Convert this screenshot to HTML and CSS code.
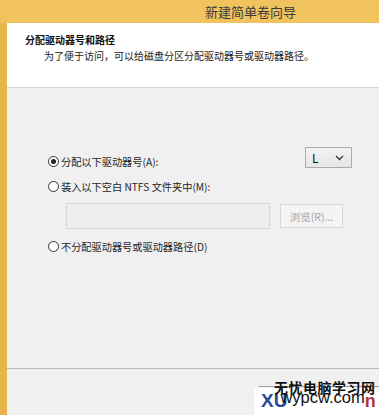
FILE: index.html
```html
<!DOCTYPE html>
<html lang="zh-CN">
<head>
    <meta charset="UTF-8">
    <title>新建简单卷向导</title>
    <link rel="stylesheet" href="styles.css">
</head>
<body>
    <div class="window">
        <div class="titlebar">新建简单卷向导</div>
        <div class="frame">
            <div class="header">
                <h1>分配驱动器号和路径</h1>
                <p>为了便于访问，可以给磁盘分区分配驱动器号或驱动器路径。</p>
            </div>

            <div class="content">
                <div class="row first">
                    <label class="option"><span class="radio checked"></span>分配以下驱动器号(A):</label>
                    <div class="select">L<svg width="9" height="6" viewBox="0 0 9 6"><path d="M1 1 L4.5 4.5 L8 1" fill="none" stroke="#333" stroke-width="1.3"/></svg></div>
                </div>
                <div class="row second">
                    <label class="option"><span class="radio"></span>装入以下空白 NTFS 文件夹中(M):</label>
                </div>
                <div class="row path-row">
                    <div class="path-input"></div>
                    <div class="btn disabled">浏览(R)...</div>
                </div>
                <div class="row last">
                    <label class="option"><span class="radio"></span>不分配驱动器号或驱动器路径(D)</label>
                </div>
            </div>

            <div class="footer">
                <div class="watermark">
                    <div class="wm-title">无忧电脑学习网</div>
                    <div class="wm-box"><span class="wm-blue">XU</span><span class="wm-url">wypcw.com</span><span class="wm-red">n</span></div>
                </div>
            </div>
        </div>
    </div>
</body>
</html>
```

FILE: styles.css
```css
* { margin: 0; padding: 0; box-sizing: border-box; }
body { font-family: "Noto Sans CJK SC", "Noto Sans", sans-serif; font-size: 10.2px; color: #1e1e1e; background: #f0f0f0; width: 379px; height: 415px; overflow: hidden; }
.window { height: 415px; display: flex; flex-direction: column; }
.titlebar { height: 23px; background: #f0c35e; color: #3a3a3a; font-size: 13px; line-height: 23px; padding-left: 205px; flex-shrink: 0; }
.frame { flex: 1; border-left: 7px solid #e8b54d; display: flex; flex-direction: column; background: #f0f0f0; }
.header { height: 65px; background: #fff; border-bottom: 1px solid #d4d4d4; padding: 9px 0 0 18px; }
.header h1 { font-size: 10px; font-weight: bold; line-height: 16px; color: #111; }
.header p { font-size: 10px; line-height: 16px; padding-left: 19px; color: #222; }
.content { height: 281px; border-bottom: 1px solid #b9b9b9; padding: 59px 27px 0 41px; }
.row { display: flex; align-items: center; }
.row.first { align-items: flex-start; justify-content: space-between; }
.row.first .option { margin-top: 6px; }
.row.second { margin-top: 8px; }
.row.last { margin-top: 9px; }
.option { display: flex; align-items: center; line-height: 17px; color: #1e1e1e; }
.radio { width: 11px; height: 11px; border: 1px solid #333; border-radius: 50%; background: #fff; margin-right: 2px; display: flex; align-items: center; justify-content: center; }
.radio.checked::after { content: ""; width: 5px; height: 5px; border-radius: 50%; background: #222; }
.select { width: 47px; height: 21px; border: 1px solid #acacac; background: linear-gradient(#f2f2f2, #e6e6e6); display: flex; align-items: center; justify-content: space-between; padding: 0 7px 0 6px; font-size: 12px; color: #111; }
.path-row { margin: 8px 0 0 18px; height: 26px; gap: 10px; }
.path-input { width: 204px; height: 26px; border: 1px solid #d9d9d9; background: #efefef; }
.btn { width: 63px; height: 24px; border: 1px solid #d6d6d6; background: #f4f4f4; display: flex; align-items: center; justify-content: center; font-size: 10.5px; }
.btn.disabled { color: #a6a6a6; }
.footer { flex: 1; position: relative; background: #f0f0f0; }
.watermark { position: absolute; left: 240px; top: 11px; right: 0; bottom: 0; }
.wm-title { position: relative; z-index: 2; font-size: 14px; font-weight: bold; line-height: 15px; color: #111; padding-left: 27px; letter-spacing: 0.5px; white-space: nowrap; }
.wm-title::before { content: ""; position: absolute; left: 12px; right: 0; top: 6px; height: 1px; background: #9aa3b4; z-index: -1; }
.wm-box { position: absolute; z-index: 1; left: 7px; top: 8px; right: 0; bottom: 0; background: #fff; padding-left: 7px; white-space: nowrap; }
.wm-blue { font-family: "Liberation Sans", sans-serif; font-weight: bold; font-size: 19px; color: #2c4a9a; line-height: 22px; }
.wm-url { font-family: "Liberation Sans", sans-serif; font-size: 16.5px; color: #111; margin-left: -7px; vertical-align: 4px; }
.wm-red { font-family: "Liberation Sans", sans-serif; font-weight: bold; font-size: 18px; color: #b3323a; }
```
